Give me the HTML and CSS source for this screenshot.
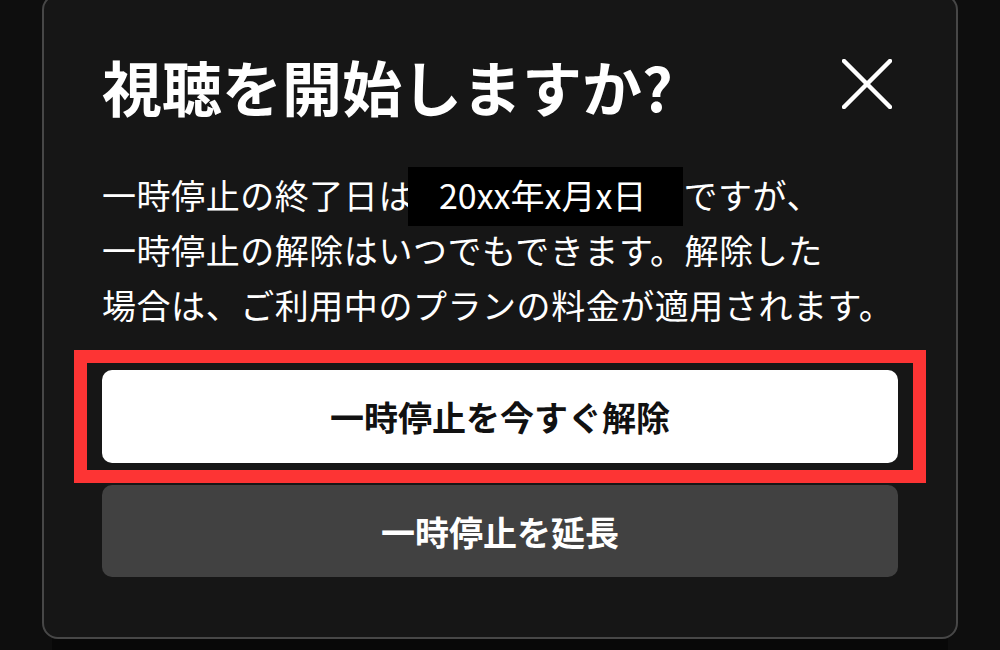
FILE: index.html
```html
<!DOCTYPE html>
<html lang="ja">
<head>
<meta charset="utf-8">
<title>視聴を開始しますか?</title>
<link rel="stylesheet" href="styles.css">
</head>
<body>
<div class="panel">
  <div class="header">
    <h1 class="title">視聴を開始しますか?</h1>
    <svg class="close" viewBox="0 0 50 50" width="50" height="50" aria-label="閉じる">
      <line x1="2" y1="2" x2="48" y2="48" />
      <line x1="48" y1="2" x2="2" y2="48" />
    </svg>
  </div>
  <p class="message">一時停止の終了日は<span class="date">20xx年x月x日</span>ですが、<br>一時停止の解除はいつでもできます。解除した<br>場合は、ご利用中のプランの料金が適用されます。</p>
  <div class="actions">
    <div class="highlight">
      <button class="btn btn-primary">一時停止を今すぐ解除</button>
    </div>
    <button class="btn btn-secondary">一時停止を延長</button>
  </div>
</div>
<div class="under"></div>
</body>
</html>
```

FILE: styles.css
```css
html, body {
  margin: 0;
  padding: 0;
}
body {
  width: 1000px;
  height: 650px;
  overflow: hidden;
  background: #0e0e0e;
  font-family: "Noto Sans CJK JP", "Noto Sans", sans-serif;
  color: #ffffff;
}
.panel {
  box-sizing: border-box;
  width: 916px;
  height: 645px;
  margin: -6px 0 0 42px;
  padding: 60px 58px 0 58px;
  background: #161616;
  border: 2px solid #474747;
  border-radius: 16px;
}
.header {
  display: flex;
  justify-content: space-between;
  align-items: flex-start;
}
.title {
  margin: 0;
  font-size: 60px;
  line-height: 60px;
  font-weight: 700;
  letter-spacing: 0;
}
.close {
  margin: 3px 6px 0 0;
  stroke: #ffffff;
  stroke-width: 4.5;
  stroke-linecap: round;
}
.message {
  margin: 51px 0 0 0;
  font-size: 34px;
  letter-spacing: 0.55px;
  line-height: 55px;
  font-weight: 400;
  white-space: nowrap;
}
.date {
  background: #000000;
  margin-left: -5px;
  padding: 3px 37px 7px 31px;
  letter-spacing: 0;
}
.actions {
  margin-top: 38px;
  display: flex;
  flex-direction: column;
  gap: 22px;
}
.highlight {
  position: relative;
}
.highlight::after {
  content: "";
  position: absolute;
  top: -20px;
  left: -28px;
  right: -28px;
  bottom: -20px;
  border: 13px solid #fd3434;
  pointer-events: none;
}
.btn {
  display: flex;
  align-items: center;
  justify-content: center;
  width: 100%;
  height: 93px;
  border: none;
  border-radius: 10px;
  font-family: "Noto Sans CJK JP", "Noto Sans", sans-serif;
  font-size: 34px;
  font-weight: 700;
  padding: 0;
}
.btn-primary {
  background: #ffffff;
  color: #111111;
}
.btn-secondary {
  background: #414141;
  color: #ffffff;
  height: 92px;
}
.under {
  width: 896px;
  height: 20px;
  margin-left: 52px;
  background: #080808;
}
```
